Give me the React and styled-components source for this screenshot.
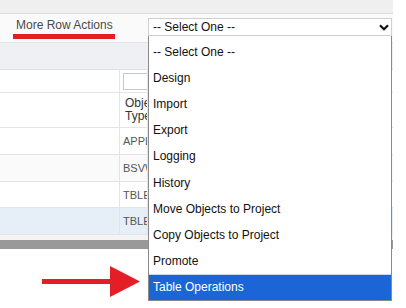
import React from "react";
import styled, { createGlobalStyle } from "styled-components";

const Global = createGlobalStyle`
  html, body { margin: 0; padding: 0; background: #fff; }
  body { font-family: "Liberation Sans", Arial, sans-serif; }
`;

const Page = styled.div`
  position: relative;
  width: 406px;
  height: 308px;
  overflow: hidden;
  background: #fff;
`;

const Screen = styled.div`
  width: 393px;
  display: flex;
  flex-direction: column;
`;

const TopBand = styled.div`
  height: 13px;
  background: #efefef;
  border-bottom: 1px solid #dcdcdc;
`;

const Toolbar = styled.div`
  height: 29px;
  background: #fafafa;
  display: flex;
  align-items: flex-start;
  padding-left: 16px;
  box-sizing: border-box;
  border-bottom: 1px solid #e2e4e8;
`;

const ActionLabel = styled.div`
  position: relative;
  margin-top: 4px;
  width: 132px;
  font-size: 12px;
  color: #4a4a4a;
  line-height: 14px;
`;

const Underline = styled.div`
  position: absolute;
  left: -3px;
  top: 16px;
  width: 102px;
  height: 5px;
  background: #e41e26;
`;

const SelectBox = styled.div`
  margin-top: 4px;
  width: 244px;
  height: 18px;
  box-sizing: border-box;
  border: 1px solid #cfcfcf;
  background: #fff;
  display: flex;
  align-items: center;
  justify-content: space-between;
  padding: 0 2px 0 4px;
  font-size: 12px;
  color: #111;
`;

const FilterBand = styled.div`
  height: 26px;
  background: #eef0f3;
  border-bottom: 1px solid #dfe1e5;
`;

const Row = styled.div`
  display: grid;
  grid-template-columns: 120px 28px 1fr;
  height: ${(p) => p.$h}px;
  background: ${(p) => p.$bg || "#fff"};
  border-bottom: 1px solid #e4e4e4;
  box-sizing: border-box;
`;

const Cell = styled.div`
  border-right: 1px solid #e4e4e4;
  display: flex;
  align-items: center;
  padding-left: 3px;
  font-size: 11px;
  color: #555;
  line-height: 12px;
  overflow: hidden;
  white-space: nowrap;
  &:last-child { border-right: none; }
`;

const FilterInput = styled.div`
  flex: none;
  width: 60px;
  height: 17px;
  border: 1px solid #c8c8c8;
  background: #fff;
  box-sizing: border-box;
`;

const HeaderText = styled.div`
  font-size: 12px;
  color: #333;
  line-height: 13px;
  padding-left: 2px;
`;

const Gap = styled.div`
  height: 5px;
  background: #f3f3f3;
`;

const Scrollbar = styled.div`
  height: 9px;
  background: #999;
`;

const DropList = styled.div`
  position: absolute;
  left: 148px;
  top: 36px;
  width: 244px;
  height: 265px;
  box-sizing: border-box;
  border: 1px solid #8a8a8a;
  border-top: none;
  background: #fff;
  display: grid;
  grid-template-rows: repeat(10, 1fr);
  padding-top: 3px;
`;

const Option = styled.div`
  display: flex;
  align-items: center;
  padding-left: 4px;
  font-size: 12px;
  color: ${(p) => (p.$active ? "#fff" : "#111")};
  background: ${(p) => (p.$active ? "#1b66d6" : "#fff")};
  ${(p) => p.$active && "border-top: 1px solid #c8d6ea;"}
`;

const Arrow = styled.svg`
  position: absolute;
  left: 40px;
  top: 264px;
`;

const options = [
  "-- Select One --",
  "Design",
  "Import",
  "Export",
  "Logging",
  "History",
  "Move Objects to Project",
  "Copy Objects to Project",
  "Promote",
  "Table Operations",
];

const rows = [
  { h: 27, v: "APPL" },
  { h: 27, v: "BSVW", bg: "#fafafa" },
  { h: 26, v: "TBLE" },
  { h: 27, v: "TBLE", bg: "#e6eef7" },
];

export default function App() {
  return (
    <Page>
      <Global />
      <Screen>
        <TopBand />
        <Toolbar>
          <ActionLabel>
            More Row Actions
            <Underline />
          </ActionLabel>
          <SelectBox>
            <span>-- Select One --</span>
            <svg width="10" height="7" viewBox="0 0 10 7">
              <path d="M1 1.2 L5 5.2 L9 1.2" fill="none" stroke="#111" strokeWidth="2.2" />
            </svg>
          </SelectBox>
        </Toolbar>
        <FilterBand />
        <Row $h={23}>
          <Cell />
          <Cell>
            <FilterInput />
          </Cell>
          <Cell />
        </Row>
        <Row $h={35}>
          <Cell />
          <Cell>
            <HeaderText>
              Obje
              <br />
              Type
            </HeaderText>
          </Cell>
          <Cell />
        </Row>
        {rows.map((r, i) => (
          <Row key={i} $h={r.h} $bg={r.bg}>
            <Cell />
            <Cell>{r.v}</Cell>
            <Cell />
          </Row>
        ))}
        <Gap />
        <Scrollbar />
      </Screen>
      <DropList>
        {options.map((o, i) => (
          <Option key={o} $active={i === options.length - 1}>
            {o}
          </Option>
        ))}
      </DropList>
      <Arrow width="104" height="36" viewBox="0 0 104 36">
        <rect x="2" y="15" width="72" height="5" fill="#e41e26" />
        <polygon points="70,2 100,17.5 70,33" fill="#e41e26" />
      </Arrow>
    </Page>
  );
}
